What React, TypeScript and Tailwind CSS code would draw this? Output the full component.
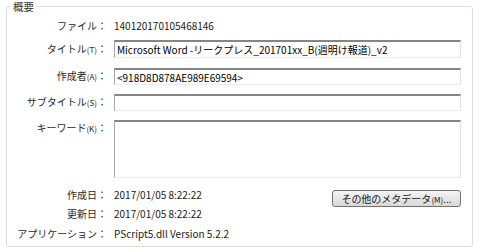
import React from "react";

const font = { fontFamily: '"Noto Sans CJK JP", "Noto Sans", sans-serif' };

function Label({ text, m }: { text: string; m?: string }) {
  return (
    <div className="w-[107px] shrink-0 pr-[7px] text-right text-[10px] leading-[14px] text-[#2a2a2a] whitespace-nowrap">
      {text}
      {m && <span className="text-[8px]">({m})</span>}
      ：
    </div>
  );
}

function Input({ h, value }: { h: string; value?: string }) {
  return (
    <div
      className={`w-[347px] ${h} border-t-2 border-l border-r border-b border-t-[#858585] border-l-[#a8a8a8] border-r-[#e2e2e2] border-b-[#ececec] bg-white pl-[2px] text-[10px] leading-[15px] text-black whitespace-nowrap overflow-hidden`}
    >
      {value}
    </div>
  );
}

export default function App() {
  return (
    <div className="w-[480px] h-[251px] bg-white pt-[6px] pl-[6px]" style={font}>
      <div className="relative w-[467px] h-[241px] border border-[#dcdcdc] rounded-[3px] pt-[12px]">
        <div className="absolute left-[4px] top-[-6px] bg-white px-[2px] text-[10.5px] leading-[12px] text-[#333]">
          概要
        </div>
        <div className="flex items-center h-[14px]">
          <Label text="ファイル" />
          <div className="text-[10px] leading-[14px] text-[#1a1a1a]">140120170105468146</div>
        </div>
        <div className="flex items-center mt-[7px]">
          <Label text="タイトル" m="T" />
          <Input h="h-[18px]" value="Microsoft Word -リークプレス_201701xx_B(週明け報道)_v2" />
        </div>
        <div className="flex items-center mt-[10px]">
          <Label text="作成者" m="A" />
          <Input h="h-[17px]" value="<918D8D878AE989E69594>" />
        </div>
        <div className="flex items-center mt-[9px]">
          <Label text="サブタイトル" m="S" />
          <Input h="h-[17px]" />
        </div>
        <div className="flex items-start mt-[9px]">
          <div className="pt-[1px]">
            <Label text="キーワード" m="K" />
          </div>
          <Input h="h-[58px]" />
        </div>
        <div className="flex items-start mt-[10px] h-[19px]">
          <Label text="作成日" />
          <div className="text-[10px] leading-[14px] text-[#1a1a1a]">2017/01/05 8:22:22</div>
          <div className="ml-auto mr-[11px] mt-[2px] w-[129px] h-[17px] rounded-[3px] border border-[#707070] bg-gradient-to-b from-[#f4f4f4] to-[#d9d9d9] text-center text-[10px] leading-[15px] text-[#1a1a1a] whitespace-nowrap">
            その他のメタデータ<span className="text-[8px]">(M)</span>...
          </div>
        </div>
        <div className="flex items-center h-[14px]">
          <Label text="更新日" />
          <div className="text-[10px] leading-[14px] text-[#1a1a1a]">2017/01/05 8:22:22</div>
        </div>
        <div className="flex items-center h-[14px] mt-[6px]">
          <Label text="アプリケーション" />
          <div className="text-[10px] leading-[14px] text-[#1a1a1a]">PScript5.dll Version 5.2.2</div>
        </div>
      </div>
    </div>
  );
}
